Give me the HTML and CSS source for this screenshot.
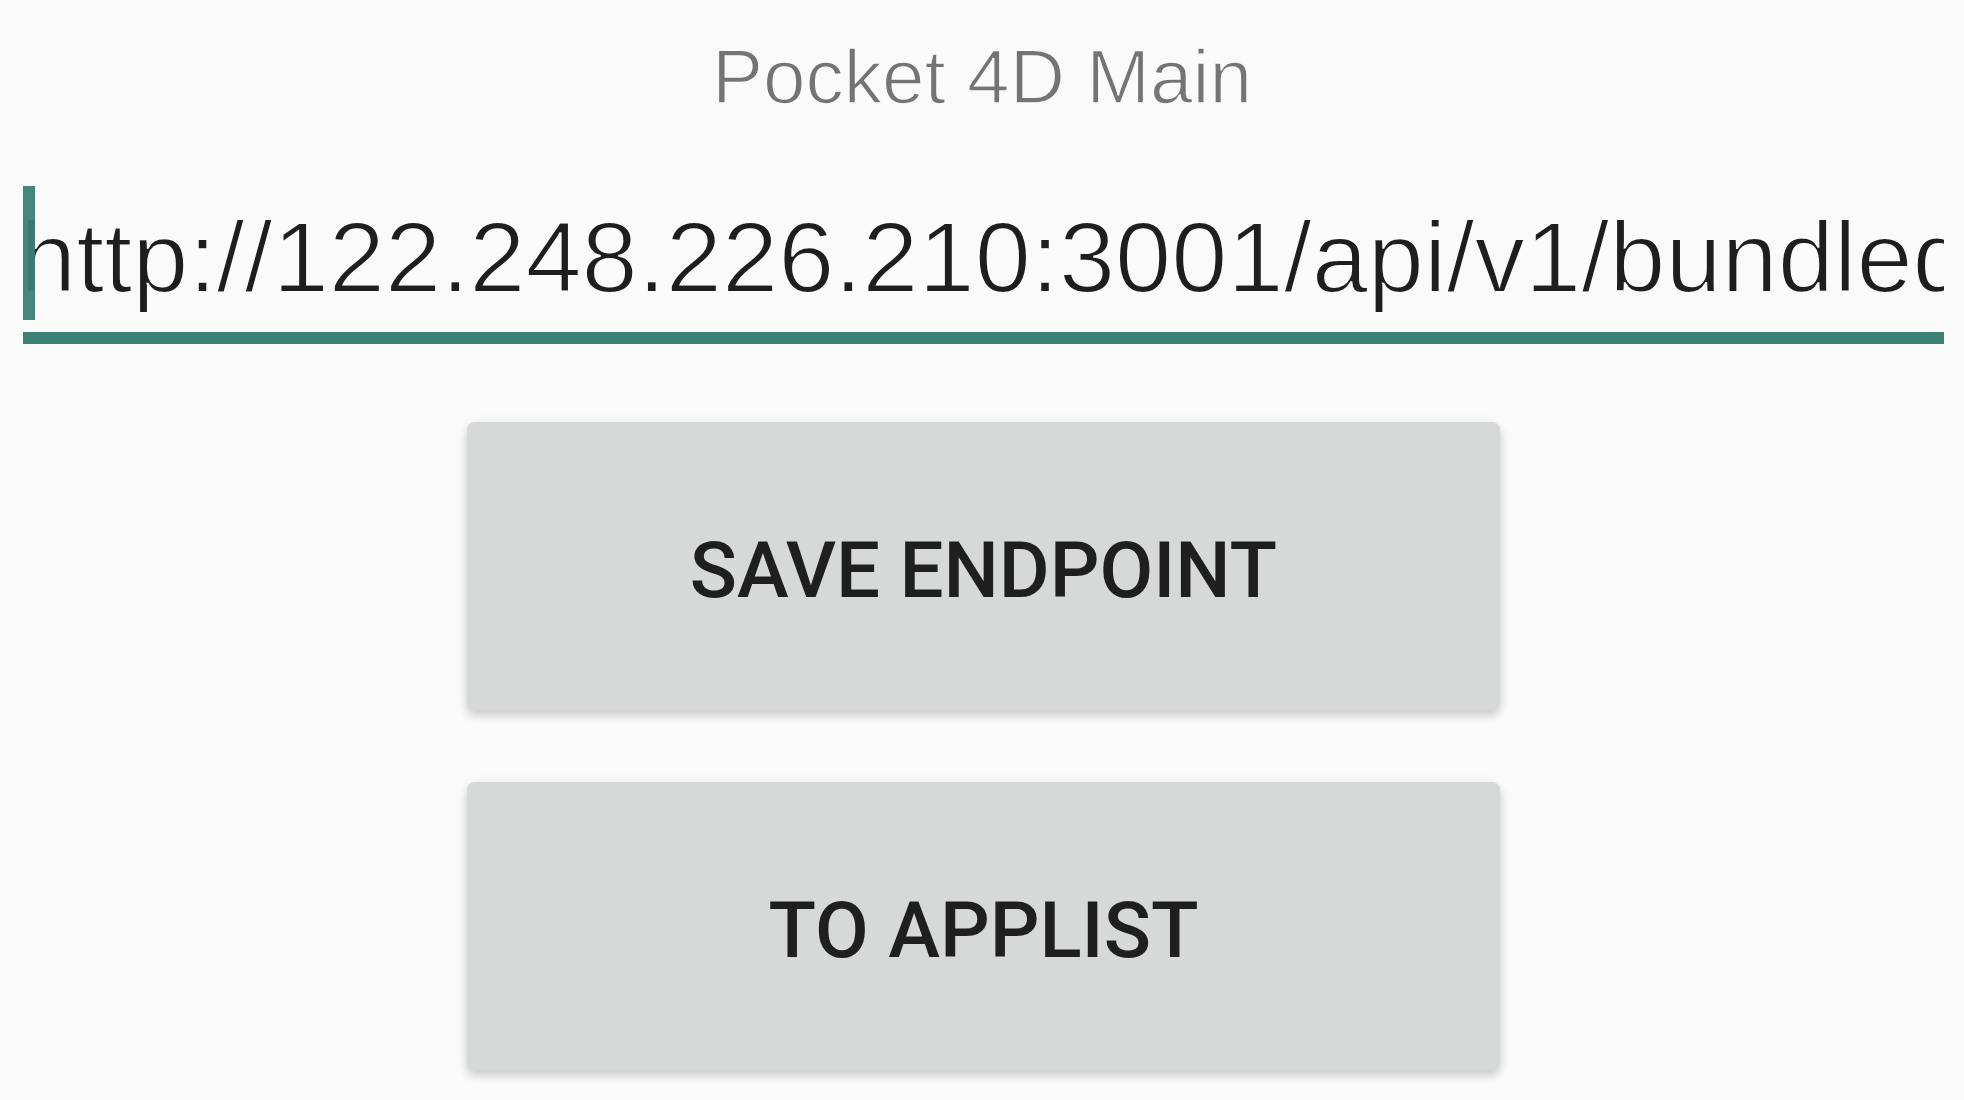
FILE: index.html
```html
<!DOCTYPE html>
<html lang="en">
<head>
<meta charset="utf-8">
<title>Pocket 4D Main</title>
<link rel="stylesheet" href="styles.css">
</head>
<body>
<div class="screen">
  <header class="title">Pocket 4D Main</header>
  <div class="field-wrap">
    <div class="field">
      <span class="caret"></span>
      <span class="field-text">http://122.248.226.210:3001/api/v1/bundled</span>
    </div>
  </div>
  <div class="actions">
    <button class="btn" type="button">SAVE ENDPOINT</button>
    <button class="btn" type="button">TO APPLIST</button>
  </div>
</div>
</body>
</html>
```

FILE: styles.css
```css
html, body {
  margin: 0;
  padding: 0;
  background: #fafafa;
}

.screen {
  width: 1964px;
  height: 1100px;
  overflow: hidden;
  display: flex;
  flex-direction: column;
  background: #fafafa;
}

.title {
  padding-top: 32px;
  height: 90px;
  line-height: 90px;
  text-align: center;
  font-family: "Liberation Sans", Arial, sans-serif;
  font-size: 76.5px;
  color: #747474;
  -webkit-text-stroke: 1.6px #fafafa;
  paint-order: fill stroke;
}

.field-wrap {
  margin-top: 64px;
  padding: 0 20px 0 23px;
}

.field {
  position: relative;
  height: 142px;
  padding-bottom: 4px;
  border-bottom: 12px solid #3a8276;
  overflow: hidden;
  white-space: nowrap;
}

.field-text {
  display: block;
  text-indent: -3px;
  font-family: "Liberation Sans", Arial, sans-serif;
  font-size: 101px;
  line-height: 142px;
  color: #1e1e1e;
  -webkit-text-stroke: 2px #fafafa;
  paint-order: fill stroke;
}

.caret {
  position: absolute;
  z-index: 1;
  left: 0;
  top: 0;
  width: 12px;
  height: 134px;
  background: #3a8276;
  opacity: 0.95;
}

.actions {
  margin-top: 78px;
  display: flex;
  flex-direction: column;
  align-items: center;
  gap: 72px;
  padding-left: 3px;
}

.btn {
  width: 1033px;
  height: 288px;
  border: none;
  border-radius: 8px;
  background: #d7d8d8;
  box-shadow: 0 6px 8px rgba(0, 0, 0, 0.14), 0 2px 14px rgba(0, 0, 0, 0.07);
  font-family: Roboto, "Noto Sans", sans-serif;
  font-weight: 500;
  font-size: 78px;
  color: #1f1f1f;
  padding: 8px 0 0;
  cursor: pointer;
}
```
